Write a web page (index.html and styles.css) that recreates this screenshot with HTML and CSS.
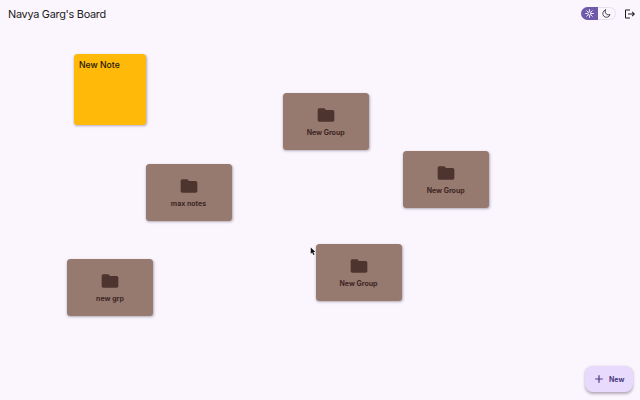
FILE: index.html
```html
<!DOCTYPE html>
<html lang="en">
<head>
<meta charset="utf-8">
<title>Navya Garg's Board</title>
<link rel="stylesheet" href="styles.css">
</head>
<body>
<svg class="defs" aria-hidden="true"><symbol id="folder" viewBox="0 0 24 24"><path d="M10 4H4c-1.1 0-2 .9-2 2v12c0 1.1.9 2 2 2h16c1.1 0 2-.9 2-2V8c0-1.1-.9-2-2-2h-8z"/></symbol></svg>
<header class="bar">
  <h1 class="title">Navya Garg's Board</h1>
  <div class="actions">
    <div class="toggle">
      <span class="half sun"><svg viewBox="0 0 24 24"><circle cx="12" cy="12" r="4.4"/><path d="M12 1.5v4M12 18.500v4M1.500 12h4M18.500 12h4M4.600 4.600l2.800 2.800M16.600 16.600l2.800 2.800M4.600 19.400l2.800-2.800M16.600 7.400l2.800-2.800"/></svg></span>
      <span class="half moon"><svg viewBox="0 0 24 24"><path d="M9 2.500A10 10 0 1 0 21.500 15A9.500 9.500 0 0 1 9 2.500z"/></svg></span>
    </div>
    <svg class="logout" viewBox="0 0 24 24"><path d="M17 7l-1.410 1.410L18.170 11H8v2h10.170l-2.580 2.580L17 17l5-5zM4 5h8V3H4c-1.100 0-2 .9-2 2v14c0 1.100.9 2 2 2h8v-2H4V5z"/></svg>
  </div>
</header>
<main class="canvas">
  <article class="note">New Note</article>
  <article class="group g1"><svg><use href="#folder"/></svg><span>New Group</span></article>
  <article class="group g2"><svg><use href="#folder"/></svg><span>New Group</span></article>
  <article class="group g3"><svg><use href="#folder"/></svg><span>max notes</span></article>
  <article class="group g4"><svg><use href="#folder"/></svg><span>New Group</span></article>
  <article class="group g5"><svg><use href="#folder"/></svg><span>new grp</span></article>
  <svg class="cursor" viewBox="0 0 10 16"><path d="M1 1v11l2.600-2.400 2 4.600 2-.9-2-4.500h3.600z"/></svg>
</main>
<button class="fab"><svg viewBox="0 0 24 24"><path d="M19.500 13.200h-6.300v6.300h-2.400v-6.300H4.500v-2.400h6.300V4.500h2.400v6.300h6.300z"/></svg><span>New</span></button>
</body>
</html>
```
FILE: styles.css
```css
* { box-sizing: border-box; }
body {
  margin: 0;
  width: 640px;
  height: 400px;
  overflow: hidden;
  background: #fbf6fe;
  color: #1d1b20;
  font-family: Inter, "Liberation Sans", sans-serif;
}
.defs { display: none; }
.bar {
  display: flex;
  align-items: center;
  justify-content: space-between;
  height: 27px;
  padding: 0 4px 0 8px;
}
.title { margin: 0; font-size: 10.9px; font-weight: 400; letter-spacing: -0.28px; }
.actions { display: flex; align-items: center; gap: 8px; }
.toggle {
  display: flex;
  width: 35px;
  height: 13px;
  border: 1px solid #e6e0ec;
  border-radius: 7px;
}
.half { display: flex; flex: 1; align-items: center; justify-content: center; }
.half svg { width: 9px; height: 9px; fill: none; stroke-width: 2.3; stroke-linecap: round; }
.sun { margin: -1px 0 -1px -1px; border-radius: 7px 0 0 7px; background: #6f5aaa; }
.sun svg { stroke: #fff; }
.moon svg { stroke: #36323c; }
.logout { width: 12px; height: 12px; fill: #1d1b20; }
.canvas { position: relative; height: 373px; }
.note, .group {
  position: absolute;
  border-radius: 3.5px;
  box-shadow: 0.5px 1px 2.5px rgba(40, 25, 45, 0.35);
}
.note {
  left: 74px;
  top: 27px;
  width: 72px;
  height: 71px;
  padding: 6px 5px;
  background: #ffb908;
  color: #1d1605;
  font-size: 8.7px;
  line-height: 11px;
  font-weight: 500;
}
.group {
  display: flex;
  flex-direction: column;
  align-items: center;
  width: 86px;
  height: 57px;
  padding-top: 12px;
  background: #967a70;
  color: #3e2723;
  font-size: 7px;
  font-weight: 700;
  line-height: 10px;
}
.group svg { width: 20px; height: 20px; fill: #4e342e; }
.group span { margin-top: 3px; }
.g1 { left: 282.7px; top: 65.6px; }
.g2 { left: 402.7px; top: 124px; }
.g3 { left: 145.5px; top: 136.6px; }
.g4 { left: 315.5px; top: 217px; }
.g5 { left: 67px; top: 232px; }
.cursor { position: absolute; left: 309.5px; top: 220px; width: 6px; height: 9px; fill: #111; }
.fab {
  position: absolute;
  right: 7px;
  bottom: 8px;
  display: flex;
  align-items: center;
  gap: 4px;
  width: 48px;
  height: 26px;
  padding: 0 0 0 8px;
  border: 0;
  border-radius: 8px;
  background: #e8dafc;
  color: #4b3a82;
  font: 700 7px Inter, sans-serif;
  box-shadow: 0 1.5px 3px rgba(40, 25, 45, 0.35);
}
.fab svg { width: 12px; height: 12px; fill: #4b3a82; }
```
